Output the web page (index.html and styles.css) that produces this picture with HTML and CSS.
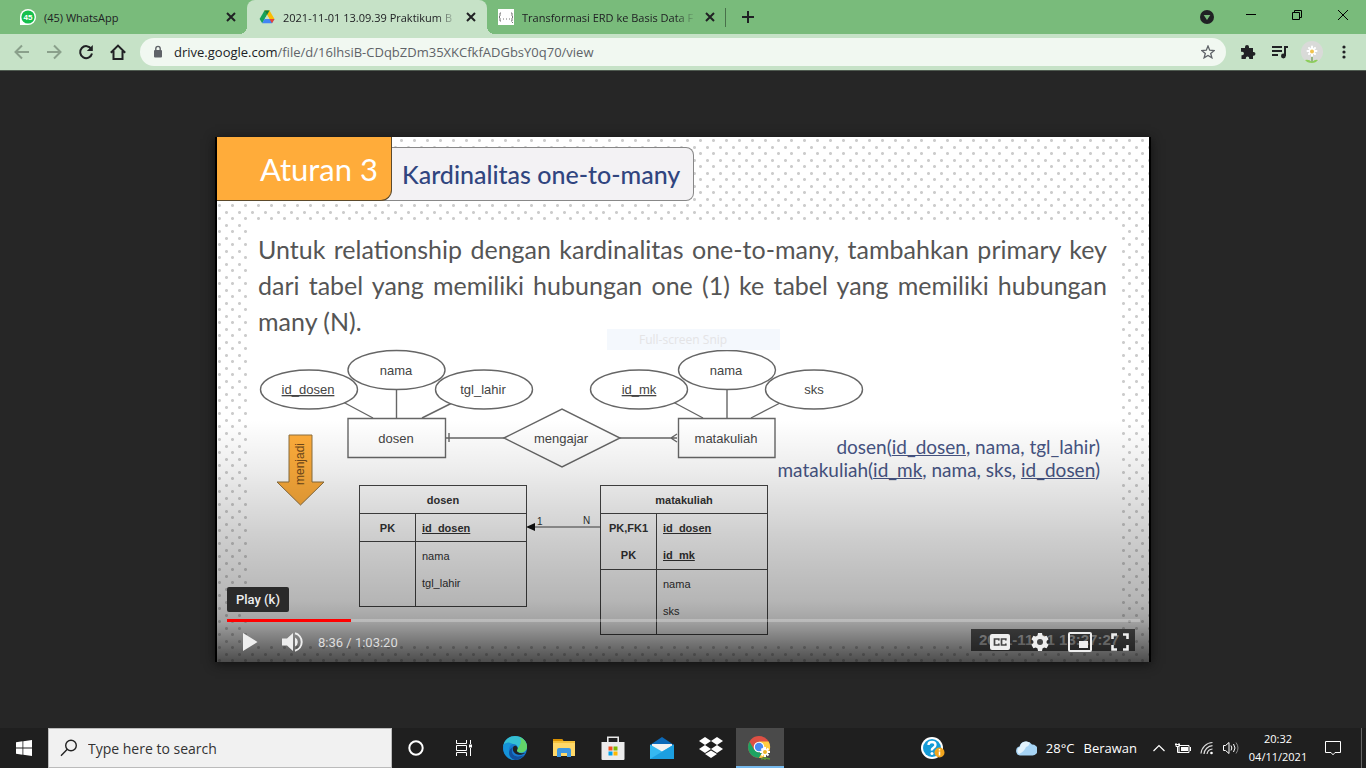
FILE: index.html
```html
<!DOCTYPE html>
<html lang="id">
<head>
<meta charset="utf-8">
<title>2021-11-01 13.09.39 Praktikum Basis Data</title>
<link rel="stylesheet" href="styles.css">
</head>
<body>
<header class="tabstrip">
  <div class="tab tab-first">
    <svg class="fav" viewBox="0 0 16 16"><path d="M0 16V8a8 8 0 1 1 8 8z" fill="#fff"/><circle cx="8" cy="8" r="6.6" fill="#16c04d"/><text x="8" y="11" text-anchor="middle" class="badge">45</text></svg>
    <span class="tab-title">(45) WhatsApp</span>
    <button class="x" aria-label="Close tab"><svg width="10" height="10" viewBox="0 0 10 10"><path d="M1 1l8 8M9 1L1 9"/></svg></button>
  </div>
  <div class="tab tab-active">
    <svg class="fav" viewBox="0 0 16 16"><path d="M5.5 1.5h5L8 6 3.2 14.3.6 10z" fill="#16a25a"/><path d="M5.5 1.5h5L15.500 10h-5z" fill="#fbbc04"/><path d="M5.500 1.500L8 6 10.500 1.500z" fill="#128040"/><path d="M5.600 10h9.900l-2.500 4.300H3.200z" fill="#4285f4"/><path d="M10.500 10h5L13 14.300z" fill="#ea4335"/><path d="M8 6l2.400 4H5.700z" fill="#c6e2c7"/></svg>
    <span class="tab-title fade">2021-11-01 13.09.39 Praktikum B</span>
    <button class="x" aria-label="Close tab"><svg width="10" height="10" viewBox="0 0 10 10"><path d="M1 1l8 8M9 1L1 9"/></svg></button>
  </div>
  <div class="tab tab-last">
    <svg class="fav" viewBox="0 0 16 16"><path d="M0 0h16v16H0z" fill="#fff"/><path d="M3 4H2v3L1 8l1 1v3h1M13 4h1v3l1 1-1 1v3h-1" fill="none" stroke="#777"/><path d="M5 10h1M8 10h1M11 10h1M14 14l1-1" stroke="#777"/></svg>
    <span class="tab-title fade">Transformasi ERD ke Basis Data F</span>
    <button class="x" aria-label="Close tab"><svg width="10" height="10" viewBox="0 0 10 10"><path d="M1 1l8 8M9 1L1 9"/></svg></button>
  </div>
  <button class="newtab" aria-label="New tab"><svg width="12" height="12" viewBox="0 0 12 12"><path d="M6 0v12M0 6h12" stroke="#202124" stroke-width="2"/></svg></button>
  <div class="win">
    <button class="wide" aria-label="Search tabs"><svg width="14" height="14" viewBox="0 0 14 14"><circle cx="7" cy="7" r="7" fill="#202124"/><path d="M3.700 5h6.600L7 10z" fill="#79bb7b"/></svg></button>
    <button aria-label="Minimize"><svg width="10" height="10" viewBox="0 0 10 10"><path d="M0 4.500h10" stroke="#000"/></svg></button>
    <button aria-label="Restore"><svg width="10" height="10" viewBox="0 0 10 10" fill="none" stroke="#000"><path d="M.5 2.500h7v7h-7zM2.500 2.500v-2h7v7h-2"/></svg></button>
    <button aria-label="Close"><svg width="10" height="10" viewBox="0 0 10 10"><path d="M0 0l10 10M10 0L0 10" stroke="#000"/></svg></button>
  </div>
</header>
<nav class="toolbar">
  <button class="tool dim" aria-label="Back"><svg width="16" height="16" viewBox="0 0 16 16"><path d="M15 8H2M8 1.500L1.500 8 8 14.500"/></svg></button>
  <button class="tool dim" aria-label="Forward"><svg width="16" height="16" viewBox="0 0 16 16"><path d="M1 8h13M8 1.500L14.500 8 8 14.500"/></svg></button>
  <button class="tool" aria-label="Reload"><svg width="16" height="16" viewBox="0 0 16 16"><path d="M13.300 5A6 6 0 1 0 14 9.500"/><path d="M14.800 1v6H8.800z" fill="#202124" stroke="none"/></svg></button>
  <button class="tool" aria-label="Home"><svg width="16" height="16" viewBox="0 0 16 16"><path d="M.8 8.800L8 1.600l7.200 7.200M3.500 7v8h9V7"/></svg></button>
  <div class="omnibox">
    <svg width="10" height="14" viewBox="0 0 10 14"><rect x="1" y="5" width="8" height="7.500" rx="1" fill="#5f6368"/><path d="M2.800 5.500V3.600a2.200 2.200 0 0 1 4.400 0v1.900" fill="none" stroke="#5f6368" stroke-width="1.400"/></svg>
    <a class="url" href="#"><span>drive.google.com</span>/file/d/16lhsiB-CDqbZDm35XKCfkfADGbsY0q70/view</a>
    <button aria-label="Bookmark"><svg width="14" height="14" viewBox="0 0 14 14"><path d="M7 1l1.700 4.200 4.500.3-3.500 2.900 1.200 4.400L7 10.400l-3.900 2.400 1.200-4.400L.8 5.500l4.500-.3z" fill="none" stroke="#5f6368" stroke-width="1.300"/></svg></button>
  </div>
  <button class="tool" aria-label="Extensions"><svg width="16" height="16" viewBox="0 0 16 16"><path d="M1 4h4V3a2 2 0 0 1 4 0v1h4v4h.6a1.800 1.800 0 0 1 0 3.700H13V15H9.200v-.8a1.700 1.700 0 0 0-3.400 0v.8H1.500v-3.800h.7a1.700 1.700 0 0 0 0-3.500H1z" fill="#202124" stroke="none"/></svg></button>
  <button class="tool" aria-label="Media control"><svg width="16" height="14" viewBox="0 0 16 14"><path d="M0 2h10M0 6h10M0 10h6M13 11V2h3"/><circle cx="11.400" cy="11" r="2.400" fill="#202124" stroke="none"/></svg></button>
  <button class="tool" aria-label="Profile"><svg width="22" height="22" viewBox="0 0 22 22" stroke="none"><circle cx="11" cy="11" r="11" fill="#d9dad8"/><path d="M10.500 12h1v9h-1z" fill="#4e8c2e"/><path d="M4 19q4-1 7 2 3-3 6-2-2 3-6 3-5 0-7-3z" fill="#8ccf5a"/><path d="M11 10V5.500M11 10V15M11 10H6.500M11 10h4.500M11 10L8 7M11 10l3-3M11 10l-3 3M11 10l3 3" stroke="#fff" stroke-width="2" stroke-linecap="round"/><circle cx="11" cy="10.500" r="2" fill="#f0c24c"/></svg></button>
  <button class="tool" aria-label="Menu"><svg width="4" height="14" viewBox="0 0 4 14"><circle cx="2" cy="2" r="1.600"/><circle cx="2" cy="7" r="1.600"/><circle cx="2" cy="12" r="1.600"/></svg></button>
</nav>

<main class="viewer">
  <section class="player">
    <div class="slide">
      <div class="slide-head">
        <h1>Aturan 3</h1>
        <h2>Kardinalitas one-to-many</h2>
      </div>
      <div class="panel">
        <p>Untuk relationship dengan kardinalitas one-to-many, tambahkan primary key dari tabel yang memiliki hubungan one (1) ke tabel yang memiliki hubungan many (N).</p>
      </div>
      <div class="diagram">
        <svg class="erd" width="932" height="304" viewBox="217 341 932 304">
          <g fill="none" stroke="#666" stroke-width="1.400">
            <path d="M343 402l30 16M396.500 389v29M452 403l-30 15M673 402l30 16M727 389v29M780 403l-29 15"/>
            <path d="M446 438h58M449 433v9M619 438h58M677 434l-6 4 6 4"/>
          </g>
          <g fill="#fff" stroke="#666" stroke-width="1.400">
            <ellipse cx="309" cy="389.500" rx="48.500" ry="19.500"/>
            <ellipse cx="484" cy="389.500" rx="48.500" ry="19.500"/>
            <ellipse cx="396.500" cy="370" rx="48.500" ry="19.500"/>
            <ellipse cx="639" cy="389.500" rx="48.500" ry="19.500"/>
            <ellipse cx="814" cy="389.500" rx="48.500" ry="19.500"/>
            <ellipse cx="727" cy="370" rx="48.500" ry="19.500"/>
            <path d="M348 418.500h97.500v39H348zM678.500 418.500H775v39h-96.500zM504 438l58-29 58 29-58 29z"/>
          </g>
          <g class="erd-text" text-anchor="middle">
            <text x="308" y="394" text-decoration="underline">id_dosen</text>
            <text x="396" y="375">nama</text>
            <text x="483" y="394">tgl_lahir</text>
            <text x="396" y="443">dosen</text>
            <text x="561" y="443">mengajar</text>
            <text x="639" y="394" text-decoration="underline">id_mk</text>
            <text x="726" y="375">nama</text>
            <text x="814" y="394">sks</text>
            <text x="726" y="443">matakuliah</text>
          </g>
          <path d="M289 435h23v47h12l-23.500 23L277 482h12z" fill="#ffad3b" stroke="#8d7040"/>
          <text class="arrow-text" transform="translate(304 464) rotate(-90)" text-anchor="middle">menjadi</text>
          <path d="M534 527h66" stroke="#444"/><path d="M526 527l9-4v8z" fill="#111"/>
          <text class="card" x="537" y="525">1</text><text class="card" x="583" y="524">N</text>
        </svg>
        <table class="entity entity-dosen">
          <colgroup><col class="key-col"><col></colgroup>
          <thead><tr><th colspan="2">dosen</th></tr></thead>
          <tbody class="keys"><tr><td>PK</td><td><u>id_dosen</u></td></tr></tbody>
          <tbody><tr><td></td><td>nama</td></tr><tr class="end"><td></td><td>tgl_lahir</td></tr></tbody>
        </table>
        <table class="entity entity-mk">
          <colgroup><col class="key-col"><col></colgroup>
          <thead><tr><th colspan="2">matakuliah</th></tr></thead>
          <tbody class="keys"><tr><td>PK,FK1</td><td><u>id_dosen</u></td></tr><tr><td>PK</td><td><u>id_mk</u></td></tr></tbody>
          <tbody><tr><td></td><td>nama</td></tr><tr class="end"><td></td><td>sks</td></tr></tbody>
        </table>
        <div class="schema">dosen(<u>id_dosen</u>, nama, tgl_lahir)<br>matakuliah(<u>id_mk</u>, nama, sks, <u>id_dosen</u>)</div>
      </div>
      <div class="stamp">2021-11-01 13:27:27</div>
      <div class="snip">Full-screen Snip</div>
    </div>
    <div class="shade"></div>
    <div class="controls">
      <div class="tip" role="tooltip">Play (k)</div>
      <input class="seek" type="range" min="0" max="3800" value="516" aria-label="Seek">
      <div class="buttons">
        <button aria-label="Play"><svg width="16" height="20" viewBox="0 0 16 20"><path d="M1 1l14.500 9L1 19z"/></svg></button>
        <button class="volume" aria-label="Volume"><svg width="22" height="20" viewBox="0 0 22 20"><path d="M0 6.500h5L11 1v18l-6-5.500H0z"/><path d="M13 5.500a5 5 0 0 1 0 9z"/><path d="M13 1.300a9 9 0 0 1 0 17.400" fill="none" stroke="#eee" stroke-width="2"/></svg></button>
        <span class="time">8:36 / 1:03:20</span>
        <button class="first-right" aria-label="Subtitles"><svg width="20" height="16" viewBox="0 0 20 16"><rect width="20" height="16" rx="2"/><path d="M8.800 6.500V5H4.500v6h4.300V9.500M15.800 6.500V5h-4.300v6h4.300V9.500" fill="none" stroke="#444" stroke-width="1.700"/></svg></button>
        <button aria-label="Settings"><svg width="18" height="18" viewBox="0 0 18 18"><path d="M7 0h4l.5 2.600 1.700 1 2.400-.9 2 3.500-2 1.700v2.200l2 1.700-2 3.500-2.400-.9-1.700 1L11 18H7l-.5-2.600-1.700-1-2.400.9-2-3.500 2-1.700V7.900l-2-1.700 2-3.500 2.400.9 1.700-1z"/><circle cx="9" cy="9" r="3" fill="#444"/></svg></button>
        <button aria-label="Miniplayer"><svg width="24" height="20" viewBox="0 0 24 20"><rect x="1" y="1" width="22" height="18" rx="1" fill="none" stroke="#eee" stroke-width="2"/><path d="M11 9h9v7h-9z"/></svg></button>
        <button aria-label="Full screen"><svg width="18" height="18" viewBox="0 0 18 18"><path d="M1.500 6v-4.500H6M12 1.500h4.500V6M16.500 12v4.500H12M6 16.500H1.500V12" fill="none" stroke="#eee" stroke-width="2.600"/></svg></button>
      </div>
    </div>
  </section>
</main>

<footer class="taskbar">
  <button class="task" aria-label="Start"><svg width="16" height="16" viewBox="0 0 16 16" fill="#fff"><path d="M0 2.200L6.500 1.300v6.300H0zM7.300 1.200L16 0v7.600H7.300zM0 8.400h6.500v6.300L0 13.800zM7.300 8.400H16V16l-8.700-1.200z"/></svg></button>
  <label class="search"><svg width="18" height="18" viewBox="0 0 18 18" fill="none" stroke="#222" stroke-width="1.400"><circle cx="11" cy="6.500" r="5.300"/><path d="M7.300 10.300L1 16.700"/></svg><input type="text" placeholder="Type here to search" aria-label="Search"></label>
  <button class="task" aria-label="Cortana"><svg width="18" height="18" viewBox="0 0 18 18"><circle cx="9" cy="9" r="6.700" fill="none" stroke="#fff" stroke-width="2"/></svg></button>
  <button class="task" aria-label="Task view"><svg width="16" height="16" viewBox="0 0 16 16" fill="none" stroke="#fff"><path d="M.5 0v3.500h10V0M.5 16v-3.500h10V16M.5 5.500h10v5H.5zM14.500 0v4M14.500 8v8"/><path d="M13 4.500h3v3h-3z" fill="#fff" stroke="none"/></svg></button>
  <div class="apps">
    <button class="task" aria-label="Edge"><svg width="24" height="24" viewBox="0 0 24 24"><circle cx="12" cy="12" r="12" fill="#1678cf"/><path d="M.3 10C1 4 6 0 12 0c7 0 12 5 12 10.500 0 4-3 6-6 6-3 0-5-1.200-4-2.500 2-3-.5-6-4-6C5 8 1 9 .3 10z" fill="#35bfd2"/><path d="M17 1.200c5 2.300 7 6 7 9.300 0 4-3 6-6 6-3 0-5-1.200-4-2.500C17 9 19 7 17 1.200z" fill="#62d568"/><path d="M10 8c-5 1-7 11 3 16C4 25-2 15 1 8q4-3 9 0z" fill="#1593d8"/><path d="M10 11c-4 7 3 12 11 8-3 4-7 5-9 5C5 22 4 14 10 11z" fill="#124f9c"/><path d="M10.500 10.500c-1.500 2-.5 7 4 8 3 .6 6-.3 7.500-1.600-3 .8-8 .3-8-2.400 0-1.200 1-1 .5-3-.7-2-3-2-4-1z" fill="#202124"/></svg></button>
    <button class="task" aria-label="File Explorer"><svg width="22" height="20" viewBox="0 0 22 20"><path d="M0 1h9l1.500 2H22v15H0z" fill="#f5c23c"/><path d="M0 1h9l1.200 2H0z" fill="#d99000"/><path d="M0 5h22v13H0z" fill="#ffd868"/><path d="M4 19v-7q0-2 2-2h10q2 0 2 2v7h-4v-4H8v4z" fill="#3e97e0"/></svg></button>
    <button class="task" aria-label="Microsoft Store"><svg width="24" height="24" viewBox="0 0 24 24"><path d="M6.800 7V1.200h10.400V7" fill="none" stroke="#e8e8e8" stroke-width="1.600"/><path d="M.5 6h23v17a1 1 0 0 1-1 1h-21a1 1 0 0 1-1-1z" fill="#ececec"/><path d="M7.500 10.500h4v4h-4z" fill="#f25022"/><path d="M12.500 10.500h4v4h-4z" fill="#7fba00"/><path d="M7.500 15.500h4v4h-4z" fill="#00a4ef"/><path d="M12.500 15.500h4v4h-4z" fill="#ffb900"/></svg></button>
    <button class="task" aria-label="Mail"><svg width="24" height="24" viewBox="0 0 24 24"><path d="M0 9l12-8 12 8v14H0z" fill="#0c69b8"/><path d="M2 8h20v8H2z" fill="#f2f2f2"/><path d="M0 8.500l12 7L24 8.500V23H0z" fill="#35b9f1"/><path d="M0 23L24 8.500V23z" fill="#1c9fe0"/></svg></button>
    <button class="task" aria-label="Dropbox"><svg width="24" height="22" viewBox="0 0 24 22" fill="#fff"><path d="M6 0l6 4-6 4-6-4zM18 0l6 4-6 4-6-4zM6 8l6 4-6 4-6-4zM18 8l6 4-6 4-6-4zM12 13.500l6 3.500-6 4-6-4z"/></svg></button>
    <button class="task running" aria-label="Chrome"><svg width="24" height="24" viewBox="0 0 24 24"><circle cx="11" cy="11" r="11" fill="#dd5044"/><path d="M1.500 5.500A11 11 0 0 0 11 22l5-8.500-5 3-5-3z" fill="#1da362"/><path d="M11 22a11 11 0 0 0 9.600-16.500H11l5 8z" fill="#ffcd42"/><circle cx="11" cy="11" r="5.300" fill="#fff"/><circle cx="11" cy="11" r="4.200" fill="#4a8af4"/><path d="M17 17v7M13 23l4-1 5 1" stroke="#5d9632" stroke-width="1.500"/><path d="M17 11v10M12 16h10M13.500 12.500l7 7M20.500 12.500l-7 7" stroke="#fff" stroke-width="2"/><circle cx="17" cy="16" r="2" fill="#efb527"/></svg></button>
  </div>
  <div class="tray">
    <button class="help" aria-label="Get Help"><svg width="24" height="22" viewBox="0 0 24 22"><circle cx="11" cy="11" r="11" fill="#fff"/><circle cx="11" cy="11" r="9" fill="#149bd7"/><path d="M7.500 8q0-3 3.500-3t3.500 3q0 1.500-2 2.700T11 13.500" fill="none" stroke="#fff" stroke-width="2.300"/><circle cx="11" cy="16.500" r="1.500" fill="#fff"/><circle cx="18.500" cy="15.500" r="5" fill="#f2a51e"/><path d="M18.500 12v1.500M18.500 14.500v4" stroke="#fff" stroke-width="1.500"/></svg></button>
    <button class="weather"><svg width="22" height="16" viewBox="0 0 22 16"><path d="M5 15.500a4.600 4.600 0 0 1-.5-9A7 7 0 0 1 17 4.500a5.500 5.500 0 0 1 .5 11z" fill="#a6d4f5"/><path d="M4 14a4 4 0 0 1 1-7 6 6 0 0 1 10-4q-1 3-4 4-2 5-7 7z" fill="#e2f3fd"/></svg><span>28°C</span><span>Berawan</span></button>
    <button class="mini" aria-label="Show hidden icons"><svg width="12" height="8" viewBox="0 0 12 8"><path d="M.5 7L6 1.500 11.500 7" fill="none" stroke="#fff" stroke-width="1.200"/></svg></button>
    <button class="mini" aria-label="Battery"><svg width="16" height="12" viewBox="0 0 16 12"><path d="M4 3.500h10v7H4z" fill="none" stroke="#fff"/><path d="M6 5h7v4H6zM15 5h1v4h-1z" fill="#fff"/><path d="M1 1v3.500h3V1M2.500 4v6.500H4M0 2.500h5" fill="none" stroke="#fff"/></svg></button>
    <button class="mini" aria-label="Network"><svg width="14" height="14" viewBox="0 0 14 14" fill="none" stroke="#ddd" stroke-width="1.200"><path d="M1 12.500A12 12 0 0 1 12.500 1.500M4 13A9 9 0 0 1 12.500 4.700M7 13a6 6 0 0 1 5.500-5"/><circle cx="11.500" cy="12" r="1.300" fill="#fff" stroke="none"/></svg></button>
    <button class="mini" aria-label="Sound"><svg width="16" height="14" viewBox="0 0 16 14" fill="none" stroke="#fff"><path d="M.5 4.500h2L6 1.500v11l-3.500-3h-2zM8 4.500q1.700 2.500 0 5M10.500 3q3 4 0 8"/><path d="M13 1.500q4 5.500 0 11" stroke="#888"/></svg></button>
    <div class="clock"><span>20:32</span><span>04/11/2021</span></div>
    <button class="notes" aria-label="Notifications"><svg width="16" height="16" viewBox="0 0 16 16"><path d="M.5 1.500h15v11H10L8 14.800 6 12.500H.5z" fill="none" stroke="#fff"/></svg></button>
    <button class="peek" aria-label="Show desktop"></button>
  </div>
</footer>
</body>
</html>
```
FILE: styles.css
```css
* { box-sizing: border-box; }
html, body { height: 100%; margin: 0; }
body {
  display: flex;
  flex-direction: column;
  min-height: 100vh;
  background: #262626;
  color: #202124;
  font-family: "Open Sans", "Noto Sans", sans-serif;
  overflow: hidden;
}
button {
  display: flex;
  align-items: center;
  justify-content: center;
  padding: 0;
  border: 0;
  background: none;
  color: inherit;
  font: inherit;
}
svg { display: block; flex: none; }

/* Browser tabs */
.tabstrip { display: flex; height: 34px; background: #79bb7b; }
.tab { position: relative; display: flex; align-items: center; gap: 8px; width: 240px; padding: 0 10px 0 12px; font-size: 11px; }
.tab-first { width: 247px; padding-left: 20px; }
.tab-active { background: #c6e2c7; border-radius: 8px 8px 0 0; }
.tab-active::before, .tab-active::after {
  content: "";
  position: absolute;
  bottom: 0;
  width: 8px;
  height: 8px;
}
.tab-active::before { left: -8px; background: radial-gradient(circle at 0 0, transparent 8px, #c6e2c7 8px); }
.tab-active::after { right: -8px; background: radial-gradient(circle at 100% 0, transparent 8px, #c6e2c7 8px); }
.tab-last { width: 239px; padding-left: 11px; }
.tab-last::after { content: ""; position: absolute; right: 0; top: 8px; height: 19px; width: 1px; background: #48704a; }
.fav { width: 16px; height: 16px; }
.badge { font: bold 8px "Liberation Sans", sans-serif; fill: #fff; }
.tab-title { flex: 1; min-width: 0; overflow: hidden; white-space: nowrap; }
.fade { -webkit-mask-image: linear-gradient(90deg, #000 88%, transparent); mask-image: linear-gradient(90deg, #000 88%, transparent); }
.x { width: 12px; height: 16px; }
.x path { stroke: #202124; stroke-width: 2; }
.newtab { width: 44px; }
.win { display: flex; margin-left: auto; }
.win button { width: 46px; height: 29px; }
.win .wide { width: 42px; height: 34px; }

/* Address bar */
.toolbar { display: flex; align-items: center; height: 37px; padding: 0 6px; background: #c6e2c7; border-bottom: 1px solid #4f5a50; }
.tool { width: 32px; height: 32px; }
.tool svg { fill: none; stroke: #202124; stroke-width: 2; }
.tool.dim svg { stroke: #8aa08b; }
.tool[aria-label="Profile"] svg, .tool[aria-label="Menu"] svg { stroke: none; }
.tool[aria-label="Menu"] svg { fill: #202124; }
.omnibox { display: flex; flex: 1; align-items: center; gap: 11px; height: 28px; margin: 0 6px; padding: 0 11px 0 13px; border-radius: 14px; background: #f1f8f1; }
.url { flex: 1; color: #5f6368; font-size: 13px; text-decoration: none; white-space: nowrap; }
.url span { color: #202124; }

/* Video */
.viewer { display: flex; flex: 1; align-items: center; padding: 0 215px; background: #262626; }
.player { position: relative; flex: 1; border: solid #000; border-width: 0 2px; box-shadow: 0 2px 10px #111; overflow: hidden; }
.slide {
  padding-bottom: 17px;
  background-color: #fff;
  background-image: radial-gradient(circle, #ccc 1px, transparent 2px), radial-gradient(circle, #ccc 1px, transparent 2px);
  background-size: 13px 13px;
  background-position: -4px -3px, 3px 4px;
  color: #555;
  font-family: Lato, "Open Sans", sans-serif;
}
.slide-head { display: flex; align-items: flex-end; height: 64px; }
h1, h2 { margin: 0; font-weight: normal; white-space: nowrap; }
h1 { position: relative; width: 175px; height: 64px; padding: 0 13px 0 0; border: solid #5c4a2c; border-width: 0 1px 1px 0; border-radius: 0 0 11px 0; background: #ffac3a; color: #fff; font-size: 31px; line-height: 64px; text-align: right; }
h2 { height: 54px; margin-left: -10px; padding: 0 13px 0 20px; border: 1px solid #888; border-left: 0; border-radius: 0 8px 8px 0; background: #f3f2f4; color: #30457f; font-size: 25px; line-height: 52px; font-weight: 500; }
.panel { margin: 20px 31px 0 30px; padding: 10px 11px 2px; background: #fff; }
.panel p { margin: 0; font-size: 25px; line-height: 36px; text-align: justify; }
.diagram { position: relative; margin: 0 31px 0 30px; background: #fff; }
.erd { margin-left: -30px; margin-right: -31px; }
.erd-text { font: 13px "Liberation Sans", sans-serif; fill: #444; }
.arrow-text { font: 12px "Liberation Sans", sans-serif; fill: #70491a; }
.card { font: 10px "Liberation Sans", sans-serif; fill: #333; }
.entity { position: absolute; top: 144px; width: 168px; border-collapse: collapse; table-layout: fixed; border: 1px solid #444; color: #333; font: 11px/14px "Liberation Sans", sans-serif; }
.entity-dosen { left: 112px; }
.entity-mk { left: 353px; }
.entity thead, .entity .keys { border-bottom: 1px solid #444; font-weight: bold; }
.key-col { width: 56px; }
.entity th, .entity td { height: 28px; padding: 0 6px; }
.entity td:first-child { padding: 0; border-right: 1px solid #444; text-align: center; }
.entity .end td { height: 37px; padding-bottom: 9px; }
.schema { position: absolute; right: 18px; top: 94px; color: #475584; font-size: 19px; line-height: 23px; text-align: right; white-space: nowrap; }
.stamp { position: absolute; right: 14px; bottom: 11px; width: 164px; padding: 0 8px; background: #606060; color: #ddd; font: bold 15px/22px "Liberation Sans", sans-serif; white-space: nowrap; }
.snip { position: absolute; left: 390px; top: 192px; width: 173px; padding-left: 32px; background: #f4f8fd; color: #e4e4e6; font: 12px/21px "Open Sans", sans-serif; }
.shade {
  position: absolute;
  inset: auto 0 0;
  height: 242px;
  background: linear-gradient(rgba(0,0,0,0), rgba(0,0,0,.07) 20%, rgba(0,0,0,.2) 50%, rgba(0,0,0,.29) 75%, rgba(0,0,0,.36) 83%, rgba(0,0,0,.52) 91%, rgba(0,0,0,.7));
}
.controls { position: absolute; inset: auto 9px 0 10px; color: #eee; font-family: Roboto, sans-serif; }
.tip { width: max-content; margin-bottom: 7px; padding: 0 9px; border-radius: 2px; background: #2a2a2a; font-size: 13px; font-weight: 500; line-height: 25px; }
.seek { display: block; width: 100%; height: 3px; margin: 0; appearance: none; background: linear-gradient(90deg, #f00 124px, rgba(255,255,255,.25) 124px); }
.seek::-webkit-slider-thumb { appearance: none; width: 0; height: 0; }
.buttons { display: flex; align-items: center; height: 40px; }
.buttons button { width: 40px; height: 40px; }
.buttons button:first-child { width: 46px; }
.buttons svg { fill: #eee; }
.time { margin-left: 5px; color: #ddd; font-size: 13px; }
.buttons .first-right { margin-left: auto; }

/* Taskbar */
.taskbar { display: flex; height: 40px; background: #1f1f1f; color: #fff; }
.task { width: 48px; height: 40px; }
.search { display: flex; align-items: center; gap: 10px; width: 344px; padding: 0 11px; border: 1px solid #bbb; background: #f1f1f1; }
.search input { flex: 1; min-width: 0; padding: 0; border: 0; outline: 0; background: none; font: 14px "Open Sans", sans-serif; }
.search input::placeholder { color: #333; opacity: 1; }
.apps { display: flex; gap: 1px; margin-left: 3px; }
.running { background: #4a4a4a; box-shadow: inset 0 -2px #76b9ed; }
.tray { display: flex; margin-left: auto; }
.help { width: 24px; margin-right: 70px; }
.weather { gap: 9px; margin-right: 10px; font-size: 13px; }
.mini { width: 24px; }
.clock { display: flex; flex-direction: column; justify-content: center; width: 70px; font-size: 11px; line-height: 18px; text-align: center; }
.notes { width: 40px; margin-right: 8px; }
.peek { width: 5px; border-left: 1px solid #666; }
```
